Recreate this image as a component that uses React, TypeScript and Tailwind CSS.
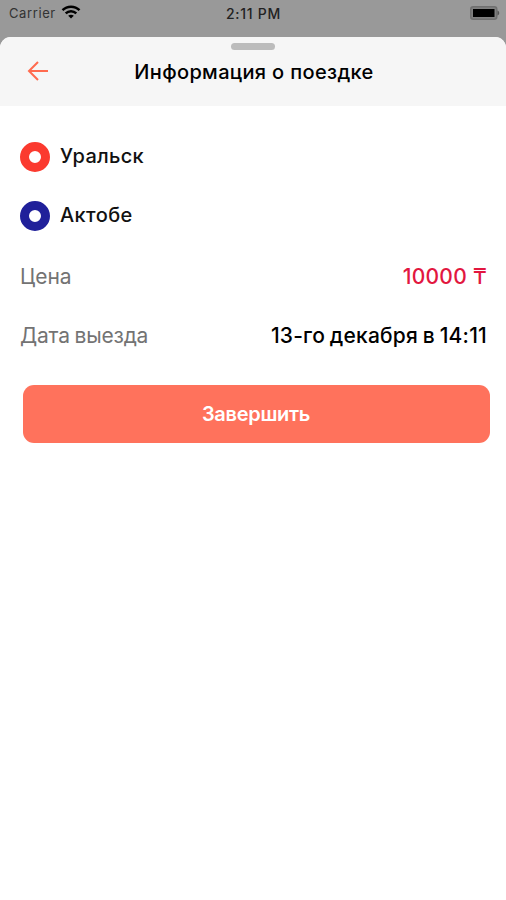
function StatusBar() {
    return (
        <div className="grid h-[37px] grid-cols-3 pt-[2px] text-[13px] leading-[23px] text-[#222222]">
            <div className="flex items-start gap-[5px] pl-[9px]">
                <span className="tracking-[0.6px] text-[#333333]">Carrier</span>
                <svg className="mt-[3px] h-[14px] w-[20px]" viewBox="0 0 20 14" fill="none" stroke="#000000">
                    <path d="M1.5 5.2C6.2 0.5 13.8 0.5 18.5 5.2" strokeWidth="2.4" />
                    <path d="M4.7 8.4C7.6 5.5 12.4 5.5 15.3 8.4" strokeWidth="2.4" />
                    <path d="M10 13.6L7.2 10.8C8.7 9.4 11.3 9.4 12.8 10.8Z" fill="#000000" stroke="none" />
                </svg>
            </div>
            <div className="pl-[1px] text-center text-[14px] font-medium tracking-[0.7px]">2:11 PM</div>
            <div className="flex items-start justify-end pr-[6px]">
                <svg className="mt-[4px] h-[14px] w-[30px]" viewBox="0 0 30 14">
                    <rect x="0.75" y="0.75" width="26" height="12.5" rx="2.5" fill="#808080" stroke="#707070" strokeWidth="1.5" />
                    <rect x="3" y="3" width="21.5" height="8" fill="#000000" />
                    <path d="M27.5 4.5C29.8 5.2 29.8 8.8 27.5 9.5Z" fill="#555555" />
                </svg>
            </div>
        </div>
    );
}

function Header() {
    return (
        <header className="flex h-[69px] flex-col items-center bg-[#f6f6f6] pt-[6px]">
            <div className="h-[7px] w-[44px] rounded-full bg-[#bcbcbc]"></div>
            <div className="mt-[9px] grid w-full grid-cols-[60px_1fr_60px] items-center">
                <button className="pb-[2px] pl-[27px]">
                    <svg className="h-[20px] w-[22px]" viewBox="0 0 22 20" fill="none" stroke="#ff6b4f" strokeWidth="2">
                        <path d="M21 10H2M11 1L2 10L11 19" />
                    </svg>
                </button>
                <h1 className="pl-[2px] text-center text-[20px] leading-[26px] font-medium tracking-[0.34px] whitespace-nowrap text-black">
                    Информация о поездке
                </h1>
            </div>
        </header>
    );
}

function App() {
    return (
        <div className="h-[900px] w-[506px] overflow-hidden bg-[#999999] font-['Inter','Liberation_Sans',sans-serif]">
            <StatusBar />
            <main className="h-[863px] overflow-hidden rounded-t-[11px] bg-white">
                <Header />
                <section className="flex flex-col pt-[21px] pr-[19px] pl-[20px] text-[20px] leading-[59px]">
                    <div className="flex h-[59px] items-center gap-[10px]">
                        <div className="h-[30px] w-[30px] rounded-full border-[9px] border-[#fb3a2f] bg-white"></div>
                        <div className="font-medium tracking-[0.3px] text-[#111111]">Уральск</div>
                    </div>
                    <div className="flex h-[59px] items-center gap-[10px]">
                        <div className="h-[30px] w-[30px] rounded-full border-[9px] border-[#20209a] bg-white"></div>
                        <div className="font-medium tracking-[0.4px] text-[#111111]">Актобе</div>
                    </div>
                    <div className="mt-[2px] flex h-[59px] justify-between">
                        <div className="text-[21px] text-[#737373]">Цена</div>
                        <div className="text-[21px] font-medium tracking-[0.3px] text-[#e2173f]">10000 ₸</div>
                    </div>
                    <div className="flex h-[59px] justify-between">
                        <div className="text-[21px] tracking-[-0.2px] [word-spacing:-1px] text-[#737373]">Дата выезда</div>
                        <div className="text-[21px] font-medium tracking-[0.2px] [word-spacing:-1px] text-black">13-го декабря в 14:11</div>
                    </div>
                </section>
                <button className="mt-[20px] ml-[23px] h-[58px] w-[467px] rounded-[11px] bg-[#ff725c] pr-[1px] text-[20px] font-semibold tracking-[-0.3px] text-white">
                    Завершить
                </button>
            </main>
        </div>
    );
}

export default App;
